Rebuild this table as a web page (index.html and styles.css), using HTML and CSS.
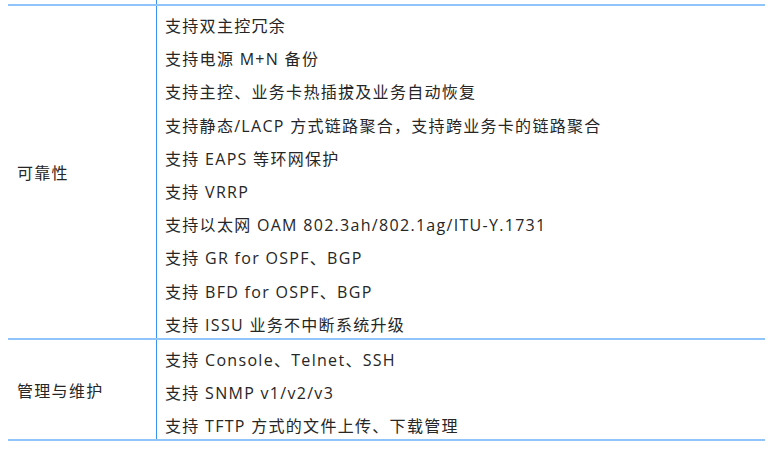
FILE: index.html
```html
<!DOCTYPE html>
<html lang="zh-CN">
<head>
    <meta charset="UTF-8">
    <meta name="viewport" content="width=device-width, initial-scale=1.0">
    <title>产品规格</title>
    <link rel="stylesheet" href="styles.css">
</head>
<body>
    <div class="spec">
        <div class="group group-prev">
            <div class="group-name"></div>
            <div class="group-items">
                <div class="item">支持用户分级管理</div>
            </div>
        </div>
        <div class="group">
            <div class="group-name">可靠性</div>
            <div class="group-items">
                <div class="item">支持双主控冗余</div>
                <div class="item">支持电源 M+N 备份</div>
                <div class="item">支持主控、业务卡热插拔及业务自动恢复</div>
                <div class="item">支持静态/LACP 方式链路聚合，支持跨业务卡的链路聚合</div>
                <div class="item">支持 EAPS 等环网保护</div>
                <div class="item">支持 VRRP</div>
                <div class="item">支持以太网 OAM 802.3ah/802.1ag/ITU-Y.1731</div>
                <div class="item">支持 GR for OSPF、BGP</div>
                <div class="item">支持 BFD for OSPF、BGP</div>
                <div class="item">支持 ISSU 业务不中断系统升级</div>
            </div>
        </div>
        <div class="group">
            <div class="group-name">管理与维护</div>
            <div class="group-items">
                <div class="item">支持 Console、Telnet、SSH</div>
                <div class="item">支持 SNMP v1/v2/v3</div>
                <div class="item">支持 TFTP 方式的文件上传、下载管理</div>
            </div>
        </div>
    </div>
</body>
</html>
```

FILE: styles.css
```css
body {
    margin: 0;
    background-color: #ffffff;
    font-family: "Open Sans", "Noto Sans CJK SC", sans-serif;
    font-size: 16px;
    letter-spacing: 1.3px;
    color: #262626;
}
.spec {
    width: 757px;
    margin: -29.2px 0 0 8px;
}
.group {
    display: flex;
    border-bottom: 2px solid #8fc5fb;
}
.group-name {
    width: 148px;
    flex-shrink: 0;
    padding-left: 9px;
    box-sizing: border-box;
    display: flex;
    align-items: center;
}
.group-items {
    flex: 1;
    border-left: 1px solid #3a92f2;
    padding-left: 8px;
}
.item {
    height: 33.2px;
    box-sizing: border-box;
    padding-top: 7px;
    line-height: 26.2px;
    white-space: nowrap;
}
```
